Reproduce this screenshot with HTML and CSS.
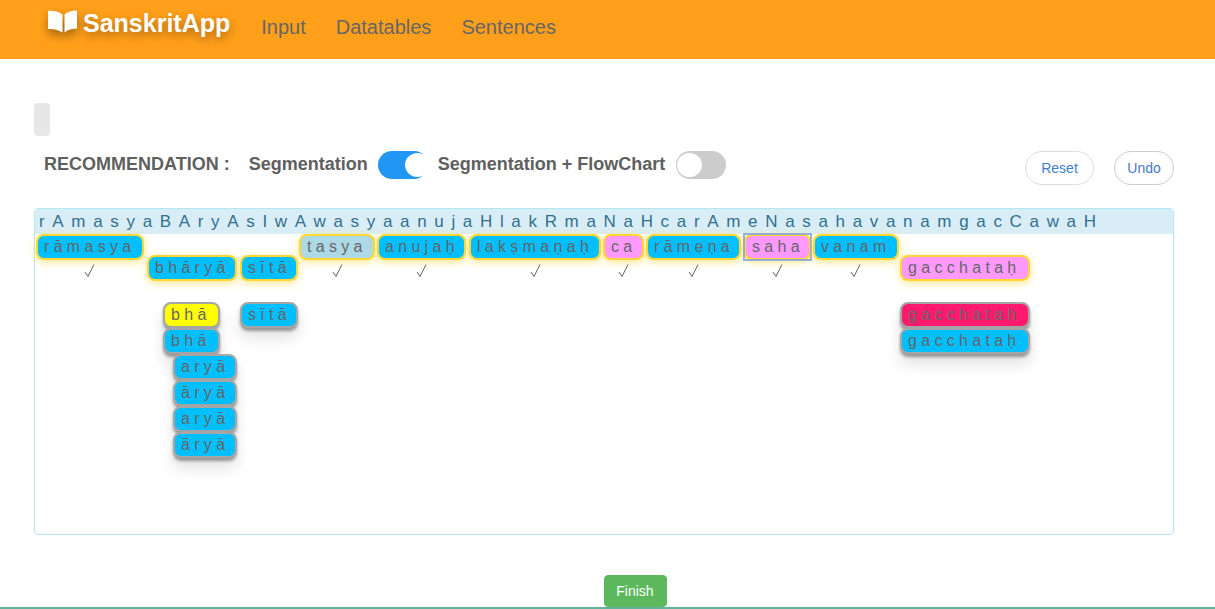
FILE: index.html
```html
<!DOCTYPE html>
<html lang="en">
<head>
  <meta charset="UTF-8" />
  <title>SanskritApp</title>
  <link rel="stylesheet" href="styles.css">
</head>
<body>
  <nav class="navbar">
    <a class="brand" href="#">
      <svg class="brand-icon" viewBox="0 0 30 24" width="30" height="24">
        <path d="M1 2C5 1.500 11 2 15.500 5.500v18C11 20.500 5 19.500 1 20z" fill="#fff"/>
        <path d="M17.500 5.500C21 2.500 25 1.500 30 1.500v18c-5 0-9 1-12.500 4z" fill="#fff"/>
      </svg>
      SanskritApp
    </a>
    <a class="nav-link" href="#">Input</a>
    <a class="nav-link" href="#">Datatables</a>
    <a class="nav-link" href="#">Sentences</a>
  </nav>

  <main class="content">
    <div class="placeholder"></div>

    <div class="toolbar">
      <span class="rec-title">RECOMMENDATION :</span>
      <span class="rec-label">Segmentation</span>
      <span class="toggle toggle-on"></span>
      <span class="rec-label rec-label-last">Segmentation + FlowChart</span>
      <span class="toggle"></span>
      <button class="btn-round btn-reset">Reset</button>
      <button class="btn-round btn-undo">Undo</button>
    </div>

    <div class="board">
      <div class="board-head">rAmasyaBAryAsIwAwasyaanujaHlakRmaNaHcarAmeNasahavanamgacCawaH</div>
      <div class="board-canvas">
        <span class="chip rec" style="left:1px;top:0;width:108px">rāmasya</span>
        <span class="chip rec" style="left:112px;top:21px;width:90px">bhāryā</span>
        <span class="chip rec" style="left:205px;top:21px;width:58px">sītā</span>
        <span class="chip rec faded" style="left:264px;top:0;width:76px">tasya</span>
        <span class="chip rec" style="left:342px;top:0;width:89px">anujaḥ</span>
        <span class="chip rec" style="left:434px;top:0;width:132px">lakṣmaṇaḥ</span>
        <span class="chip rec pink" style="left:568px;top:0;width:41px">ca</span>
        <span class="chip rec" style="left:611px;top:0;width:95px">rāmeṇa</span>
        <span class="chip rec pink focused" style="left:709px;top:0;width:67px">saha</span>
        <span class="chip rec" style="left:778px;top:0;width:86px">vanam</span>
        <span class="chip rec pink" style="left:865px;top:21px;width:130px">gacchataḥ</span>

        <svg class="tick" style="left:49px" viewBox="0 0 11 13" width="11" height="13"><path d="M1 8l3 4.500L10 .5"/></svg>
        <svg class="tick" style="left:297px" viewBox="0 0 11 13" width="11" height="13"><path d="M1 8l3 4.500L10 .5"/></svg>
        <svg class="tick" style="left:381px" viewBox="0 0 11 13" width="11" height="13"><path d="M1 8l3 4.500L10 .5"/></svg>
        <svg class="tick" style="left:495px" viewBox="0 0 11 13" width="11" height="13"><path d="M1 8l3 4.500L10 .5"/></svg>
        <svg class="tick" style="left:583px" viewBox="0 0 11 13" width="11" height="13"><path d="M1 8l3 4.500L10 .5"/></svg>
        <svg class="tick" style="left:653px" viewBox="0 0 11 13" width="11" height="13"><path d="M1 8l3 4.500L10 .5"/></svg>
        <svg class="tick" style="left:737px" viewBox="0 0 11 13" width="11" height="13"><path d="M1 8l3 4.500L10 .5"/></svg>
        <svg class="tick" style="left:815px" viewBox="0 0 11 13" width="11" height="13"><path d="M1 8l3 4.500L10 .5"/></svg>

        <span class="chip alt yellow" style="left:128px;top:68px;width:57px">bhā</span>
        <span class="chip alt" style="left:128px;top:94px;width:57px">bhā</span>
        <span class="chip alt" style="left:138px;top:120px;width:64px">aryā</span>
        <span class="chip alt" style="left:138px;top:146px;width:64px">āryā</span>
        <span class="chip alt" style="left:138px;top:172px;width:64px">aryā</span>
        <span class="chip alt" style="left:138px;top:198px;width:64px">āryā</span>
        <span class="chip alt" style="left:205px;top:68px;width:58px">sītā</span>
        <span class="chip alt crimson" style="left:865px;top:68px;width:130px">gacchataḥ</span>
        <span class="chip alt" style="left:865px;top:94px;width:130px">gacchataḥ</span>
      </div>
    </div>

    <div class="actions">
      <button class="btn-finish">Finish</button>
    </div>
  </main>
</body>
</html>
```

FILE: styles.css
```css
* {
  box-sizing: border-box;
}

html, body {
  height: 609px;
  overflow: hidden;
}

body {
  margin: 0;
  font-family: "Liberation Sans", Arial, sans-serif;
  color: #666;
  background: #fff;
  border-bottom: 2px solid #5cb39a;
}

.navbar {
  height: 59px;
  background: #ff9f1a;
  display: flex;
  align-items: flex-start;
  padding-left: 47px;
}

.brand {
  display: flex;
  align-items: center;
  gap: 6px;
  height: 47px;
  margin-right: 31px;
  color: #fff;
  font-size: 25px;
  font-weight: bold;
  text-decoration: none;
  text-shadow: 0 4px 8px rgba(0, 0, 0, 0.35);
}

.brand-icon {
  filter: drop-shadow(0 5px 5px rgba(0, 0, 0, 0.35));
  margin-top: -5px;
}

.nav-link {
  margin-right: 30px;
  padding-top: 16px;
  color: #666;
  font-size: 20px;
  text-decoration: none;
}

.content {
  padding: 44px 41px 0 34px;
}

.placeholder {
  width: 16px;
  height: 33px;
  background: #e7e7e7;
  border-radius: 4px;
}

.toolbar {
  display: flex;
  align-items: flex-start;
  height: 57px;
  margin-top: 15px;
  padding-left: 10px;
  font-size: 18px;
  font-weight: bold;
  color: #5f5f5f;
}

.rec-title {
  margin-right: 19px;
  line-height: 27px;
}

.rec-label {
  margin-right: 10px;
  line-height: 27px;
}

.rec-label-last {
  margin-right: 11px;
}

.toggle {
  position: relative;
  width: 50px;
  height: 28px;
  margin-right: 10px;
  border-radius: 14px;
  background: #ccc;
}

.toggle::after {
  content: "";
  position: absolute;
  left: 1px;
  top: 2px;
  width: 25px;
  height: 24px;
  border-radius: 50%;
  background: #fff;
}

.toggle-on {
  background: #2196f3;
}

.toggle-on::after {
  left: 27px;
}

.btn-round {
  height: 34px;
  border: 1px solid #ddd;
  border-radius: 17px;
  background: #fff;
  color: #337ab7;
  font-family: inherit;
  font-size: 14px;
  padding: 0;
}

.btn-reset {
  width: 69px;
  margin-left: auto;
  color: #3f7fd0;
}

.btn-undo {
  width: 60px;
  margin-left: 20px;
  border-color: #ccc;
  color: #4a76c9;
}

.board {
  height: 327px;
  border: 1px solid #b2e8ef;
  border-radius: 4px;
}

.board-head {
  height: 25px;
  padding-left: 4px;
  background: #d9edf7;
  color: #31708f;
  font-size: 17px;
  line-height: 25px;
  letter-spacing: 7.67px;
  white-space: nowrap;
}

.board-canvas {
  position: relative;
}

.chip {
  position: absolute;
  height: 26px;
  padding-left: 6px;
  border: 2px solid #ffd633;
  border-radius: 8px;
  background: #00bfff;
  color: #666;
  font-size: 16px;
  line-height: 21px;
  letter-spacing: 4.3px;
  white-space: nowrap;
}

.rec {
  box-shadow: 0 2px 8px rgba(255, 214, 51, 0.6);
}

.alt {
  border-color: #a6a6a6;
  box-shadow: 0 3px 3px rgba(0, 0, 0, 0.35), 0 10px 16px rgba(0, 0, 0, 0.12);
}

.faded {
  background: #add8e6;
}

.pink {
  background: #ff99ff;
}

.yellow {
  background: #ffff00;
}

.crimson {
  background: #ff1a6e;
}

.focused::after {
  content: "";
  position: absolute;
  inset: -3px;
  border: 2px solid rgba(130, 165, 220, 0.85);
}

.tick {
  position: absolute;
  top: 30px;
  fill: none;
  stroke: #666;
  stroke-width: 1;
}

.actions {
  display: flex;
  justify-content: center;
  margin-top: 40px;
  padding-left: 62px;
}

.btn-finish {
  width: 63px;
  height: 32px;
  border: 1px solid #5cb85c;
  border-radius: 4px;
  background: #5cb85c;
  color: #fff;
  font-family: inherit;
  font-size: 14px;
  padding: 0;
}
```
